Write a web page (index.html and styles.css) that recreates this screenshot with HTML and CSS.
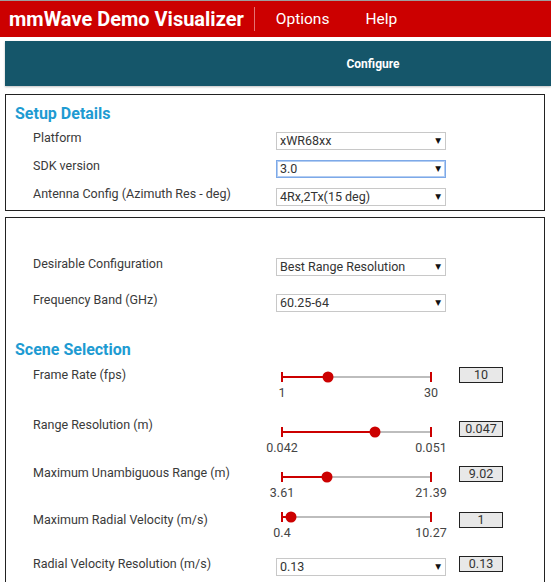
FILE: index.html
```html
<!DOCTYPE html>
<html>
<head>
<meta charset="utf-8">
<title>mmWave Demo Visualizer</title>
<link rel="stylesheet" href="styles.css">
</head>
<body>
<div class="topline"></div>
<header class="appbar">
  <span class="title">mmWave Demo Visualizer</span>
  <span class="sep"></span>
  <span class="menu menu-options">Options</span>
  <span class="menu menu-help">Help</span>
</header>
<nav class="tabbar"><span class="tab">Configure</span></nav>

<section class="panel setup">
  <h2 class="heading">Setup Details</h2>
  <div class="frow"><span class="flabel">Platform</span><div class="select"><span>xWR68xx</span><span class="arrow">▼</span></div></div>
  <div class="frow"><span class="flabel">SDK version</span><div class="select focused"><span>3.0</span><span class="arrow">▼</span></div></div>
  <div class="frow"><span class="flabel">Antenna Config (Azimuth Res - deg)</span><div class="select"><span>4Rx,2Tx(15 deg)</span><span class="arrow">▼</span></div></div>
</section>

<section class="panel scene">
  <div class="frow"><span class="flabel">Desirable Configuration</span><div class="select"><span>Best Range Resolution</span><span class="arrow">▼</span></div></div>
  <div class="frow"><span class="flabel">Frequency Band (GHz)</span><div class="select"><span>60.25-64</span><span class="arrow">▼</span></div></div>

  <h2 class="heading scene-heading">Scene Selection</h2>

  <div class="srow row-fps">
    <span class="flabel">Frame Rate (fps)</span>
    <div class="slider">
      <div class="track" style="--p:31%"><div class="fill"></div><span class="thumb"></span></div>
      <div class="ticks"><span>1</span><span>30</span></div>
    </div>
    <div class="vbox">10</div>
  </div>

  <div class="srow row-rres">
    <span class="flabel">Range Resolution (m)</span>
    <div class="slider">
      <div class="track" style="--p:62.4%"><div class="fill"></div><span class="thumb"></span></div>
      <div class="ticks"><span>0.042</span><span>0.051</span></div>
    </div>
    <div class="vbox">0.047</div>
  </div>

  <div class="srow row-mur">
    <span class="flabel">Maximum Unambiguous Range (m)</span>
    <div class="slider">
      <div class="track" style="--p:30.2%"><div class="fill"></div><span class="thumb"></span></div>
      <div class="ticks"><span>3.61</span><span>21.39</span></div>
    </div>
    <div class="vbox">9.02</div>
  </div>

  <div class="srow row-mrv">
    <span class="flabel">Maximum Radial Velocity (m/s)</span>
    <div class="slider">
      <div class="track" style="--p:6%"><div class="fill"></div><span class="thumb"></span></div>
      <div class="ticks"><span>0.4</span><span>10.27</span></div>
    </div>
    <div class="vbox">1</div>
  </div>

  <div class="srow row-rvr">
    <span class="flabel">Radial Velocity Resolution (m/s)</span>
    <div class="select"><span>0.13</span><span class="arrow">▼</span></div>
    <div class="vbox">0.13</div>
  </div>
</section>
</body>
</html>
```
FILE: styles.css
```css
html, body {
  margin: 0;
  padding: 0;
}
body {
  font-family: Roboto, "Liberation Sans", Arial, sans-serif;
  background: #ffffff;
  width: 551px;
  height: 582px;
  overflow: hidden;
  color: #3a3a3a;
}
.topline {
  height: 1px;
  background: #9e9e9e;
}
.appbar {
  height: 36px;
  background: #cc0000;
  display: flex;
  align-items: center;
  color: #ffffff;
}
.title {
  font-weight: 700;
  font-size: 20px;
  margin-left: 9px;
  white-space: nowrap;
}
.sep {
  width: 1px;
  height: 24px;
  background: #e57373;
  margin-left: 10px;
}
.menu {
  font-size: 15.5px;
}
.menu-options {
  margin-left: 21px;
}
.menu-help {
  margin-left: 36px;
}
.tabbar {
  margin: 4px 0 0 5px;
  height: 45px;
  background: #15566a;
  display: flex;
  align-items: center;
  justify-content: center;
  padding-left: 190px;
  box-shadow: 0 1px 2px rgba(0, 0, 0, 0.25);
}
.tab {
  color: #ffffff;
  font-weight: 700;
  font-size: 12px;
}
.panel {
  border: 1px solid #222222;
  margin-left: 5px;
  width: 538px;
}
.setup {
  margin-top: 8px;
  padding: 9px 0 4px 0;
}
.heading {
  margin: 0 0 6px 9px;
  font-size: 16px;
  line-height: 20px;
  font-weight: 700;
  color: #1e9bd2;
}
.frow {
  display: grid;
  grid-template-columns: 243px 170px;
  align-items: start;
  margin-left: 27px;
}
.frow + .frow {
  margin-top: 8px;
}
.flabel {
  font-size: 12.5px;
  line-height: 16px;
  color: #3a3a3a;
  white-space: nowrap;
}
.select {
  margin-top: 2px;
  height: 16px;
  border: 1px solid #c8c8c8;
  display: flex;
  align-items: center;
  justify-content: space-between;
  padding: 0 4px 0 3px;
  font-size: 12.5px;
  line-height: 16px;
  color: #333333;
  background: #ffffff;
}
.select.focused {
  border-color: #7da9e8;
  box-shadow: inset 0 0 0 1px #b3cdf2;
}
.arrow {
  font-family: "DejaVu Sans", sans-serif;
  font-size: 7.5px;
  color: #111111;
}
.scene {
  margin-top: 6px;
  padding: 38px 0 30px 0;
}
.scene .frow + .frow {
  margin-top: 16px;
}
.scene-heading {
  margin: 28px 0 7px 9px;
}
.srow {
  display: grid;
  grid-template-columns: 243px 170px 57px;
  align-items: start;
  margin-left: 27px;
}
.slider {
  padding-top: 10px;
}
.track {
  position: relative;
  margin-left: 6px;
  width: 149px;
  height: 2px;
  background: #bdbdbd;
}
.track::before,
.track::after {
  content: "";
  position: absolute;
  top: -4px;
  width: 2px;
  height: 10px;
  background: #cc0000;
}
.track::before {
  left: -1px;
}
.track::after {
  right: -1px;
}
.fill {
  width: var(--p);
  height: 2px;
  background: #cc0000;
}
.thumb {
  position: absolute;
  left: var(--p);
  top: 1px;
  width: 11px;
  height: 11px;
  border-radius: 50%;
  background: #cc0000;
  transform: translate(-50%, -50%);
}
.ticks {
  display: flex;
  justify-content: space-between;
  margin: 7px 0 0 6px;
  width: 149px;
}
.ticks span {
  width: 0;
  display: flex;
  justify-content: center;
  white-space: nowrap;
  font-size: 12.5px;
  line-height: 15px;
  color: #444444;
}
.vbox {
  margin-left: 13px;
  height: 14px;
  border: 1px solid #222222;
  background: #e8e8e8;
  text-align: center;
  font-size: 12.5px;
  line-height: 14px;
  color: #333333;
}
.row-fps {
  margin-top: 0;
}
.row-fps .slider {
  padding-top: 9px;
}
.row-rres {
  margin-top: 21px;
}
.row-rres .flabel {
  margin-top: -4px;
}
.row-mur {
  margin-top: 11px;
}
.row-mur .flabel {
  margin-top: -1px;
}
.row-mrv {
  margin-top: 12px;
}
.row-mrv .slider {
  padding-top: 4px;
}
.row-rvr {
  margin-top: 16px;
}
```
